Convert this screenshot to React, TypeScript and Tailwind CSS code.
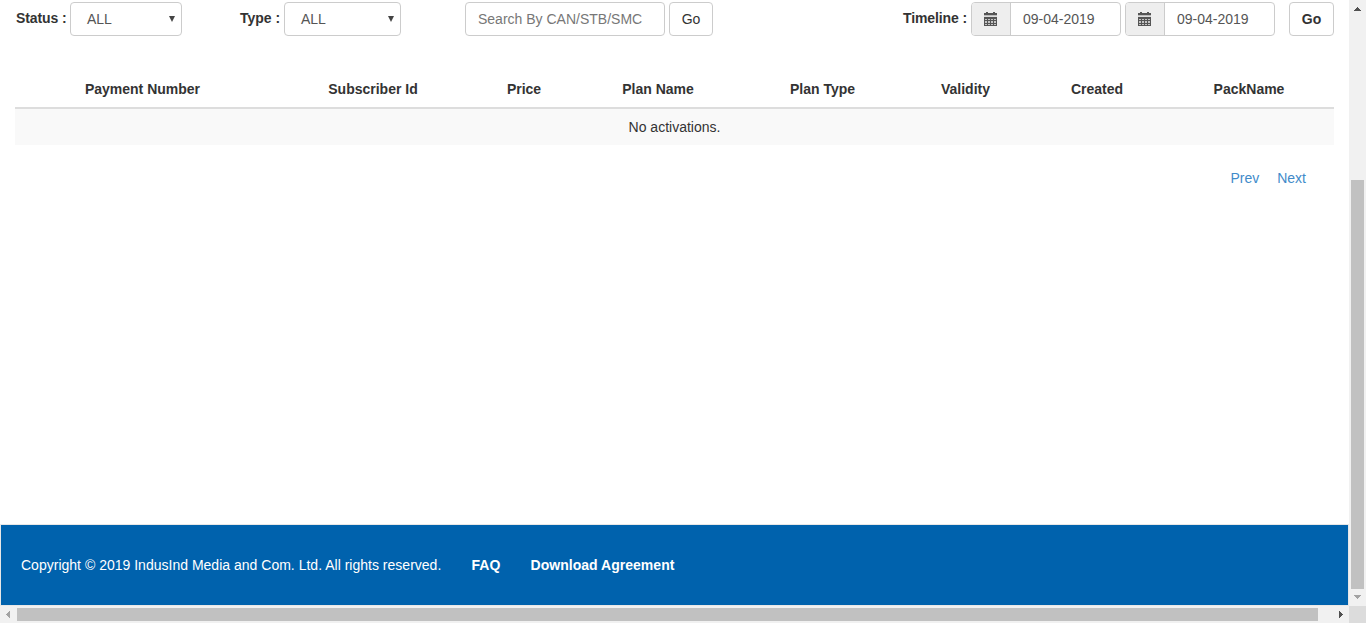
import React from "react";

const columns = [
  { label: "Payment Number", width: "w-[255px]" },
  { label: "Subscriber Id", width: "w-[206px]" },
  { label: "Price", width: "w-[96px]" },
  { label: "Plan Name", width: "w-[172px]" },
  { label: "Plan Type", width: "w-[157px]" },
  { label: "Validity", width: "w-[129px]" },
  { label: "Created", width: "w-[134px]" },
  { label: "PackName", width: "w-[170px]" },
];

function CalendarIcon() {
  return (
    <svg width="13" height="14" viewBox="0 0 13 14" shapeRendering="crispEdges" fill="#555">
      <path d="M2 0h2v1h5V0h2v1h2v2H0V1h2z" />
      <path fill="#bbb" d="M0 3h13v1H0z" />
      <path fill="#ddd" d="M0 4h13v1H0z" />
      <path d="M0 5h13v9H0z" />
      <path
        fill="#c4c4c4"
        d="M1 7h2v1H1zM4 7h2v1H4zM7 7h2v1H7zM10 7h2v1h-2zM1 9h2v2H1zM4 9h2v2H4zM7 9h2v2H7zM10 9h2v2h-2zM1 12h2v1H1zM4 12h2v1H4zM7 12h2v1H7zM10 12h2v1h-2z"
      />
    </svg>
  );
}

function Select({ width }: { width: string }) {
  return (
    <button className={`flex h-[34px] items-center justify-between rounded-[4px] border border-[#ccc] bg-white pl-4 pr-[6px] text-[#555] ${width}`}>
      <span>ALL</span>
      <svg width="6" height="6" viewBox="0 0 6 6" fill="#444">
        <path d="M0 0h6L3 6z" />
      </svg>
    </button>
  );
}

function DateField() {
  return (
    <div className="flex h-[34px] w-[150px] overflow-hidden rounded-[4px] border border-[#ccc] bg-white">
      <div className="flex w-[39px] items-center border-r border-[#ccc] bg-[#eee] pl-3">
        <CalendarIcon />
      </div>
      <span className="pl-3 leading-8 text-[#555]">09-04-2019</span>
    </div>
  );
}

function Filters() {
  return (
    <div className="flex h-[36px] items-start pl-4 pt-[2px]">
      <label className="w-[54px] whitespace-nowrap pt-[6px] font-bold tracking-[-0.1px]">Status :</label>
      <Select width="w-[112px]" />
      <label className="ml-[58px] w-[44px] whitespace-nowrap pt-[6px] font-bold">Type :</label>
      <Select width="w-[117px]" />
      <input
        className="ml-16 h-[34px] w-[200px] rounded-[4px] border border-[#ccc] px-3 placeholder:text-[#777] placeholder:opacity-100"
        placeholder="Search By CAN/STB/SMC"
      />
      <button className="ml-1 h-[34px] w-[44px] rounded-[4px] border border-[#ccc]">Go</button>
      <label className="ml-[190px] w-[68px] whitespace-nowrap pt-[6px] font-bold tracking-[-0.1px]">Timeline :</label>
      <DateField />
      <div className="ml-1">
        <DateField />
      </div>
      <button className="ml-[14px] h-[34px] w-[45px] rounded-[4px] border border-[#ccc] font-bold">Go</button>
    </div>
  );
}

export default function App() {
  return (
    <div className="flex h-[623px] w-[1366px] flex-col overflow-hidden bg-[#f1f1f1] font-['Liberation_Sans',Arial,sans-serif] text-[14px] leading-[20px] text-[#333]">
      <div className="flex h-[606px]">
        <main className="flex w-[1349px] flex-col bg-white">
          <Filters />
          <table className="ml-[15px] mt-[34px] w-[1319px] table-fixed border-collapse text-center">
            <thead>
              <tr className="h-[38px] border-b-2 border-[#ddd]">
                {columns.map((c) => (
                  <th key={c.label} className={`p-0 font-bold ${c.width}`}>
                    {c.label}
                  </th>
                ))}
              </tr>
            </thead>
            <tbody>
              <tr className="h-[37px] bg-[#f9f9f9]">
                <td colSpan={8} className="p-0">No activations.</td>
              </tr>
            </tbody>
          </table>
          <nav className="mr-[43px] mt-[23px] flex justify-end gap-[18px] text-[#428bca]">
            <a>Prev</a>
            <a>Next</a>
          </nav>
          <footer className="mt-auto flex h-[82px] items-center border border-[#e7e7e7] bg-[#0062ad] pl-5 text-white">
            <span className="w-[450.5px] tracking-[0.01px]">Copyright © 2019 IndusInd Media and Com. Ltd. All rights reserved.</span>
            <a className="w-[59px] font-bold">FAQ</a>
            <a className="font-bold tracking-[0.03px]">Download Agreement</a>
          </footer>
        </main>
        <div className="flex w-[17px] flex-col items-center">
          <svg width="17" height="17" viewBox="0 0 17 17" shapeRendering="crispEdges" fill="#505050">
            <path d="M8 7h1v1h1v1h1v1h1v1H5v-1h1V9h1V8h1z" />
          </svg>
          <div className="mt-[163px] h-[409px] w-[13px] bg-[#c1c1c1]" />
          <svg width="17" height="17" viewBox="0 0 17 17" shapeRendering="crispEdges" fill="#a3a3a3">
            <path d="M5 6h7v1h-1v1h-1v1H9v1H8V9H7V8H6V7H5z" />
          </svg>
        </div>
      </div>
      <div className="flex h-[17px] items-center">
        <svg width="17" height="17" viewBox="0 0 17 17" shapeRendering="crispEdges" fill="#a3a3a3">
          <path d="M6 8h1V7h1V6h1V5h1v7H9v-1H8v-1H7V9H6z" />
        </svg>
        <div className="h-[13px] w-[1301px] bg-[#c1c1c1]" />
        <svg className="ml-[14px]" width="17" height="17" viewBox="0 0 17 17" shapeRendering="crispEdges" fill="#505050">
          <path d="M7 5h1v1h1v1h1v1h1v1h-1v1H9v1H8v1H7z" />
        </svg>
        <div className="h-[17px] w-[17px] bg-[#dcdcdc]" />
      </div>
    </div>
  );
}
